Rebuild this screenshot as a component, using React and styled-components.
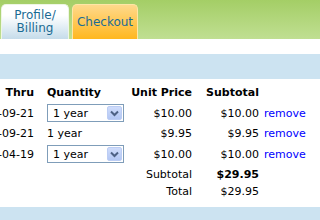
import React from 'react';
import styled, { createGlobalStyle } from 'styled-components';

const GlobalStyle = createGlobalStyle`
    body {
        margin: 0;
        background: #fff;
        font-family: "DejaVu Sans", Verdana, sans-serif;
        font-size: 11px;
        color: #000;
    }
`;

const Page = styled.div`
    width: 320px;
    height: 220px;
    overflow: hidden;
    display: flex;
    flex-direction: column;

    & > * {
        flex-shrink: 0;
    }
`;

const Header = styled.header`
    height: 39px;
    display: flex;
    align-items: flex-end;
    gap: 3px;
    padding-left: 1px;
    background-image: linear-gradient(180deg, #a4ce66, #c0df92);
`;

const Tab = styled.div`
    height: 35px;
    width: ${(p) => p.$width}px;
    box-sizing: border-box;
    display: flex;
    align-items: center;
    justify-content: center;
    text-align: center;
    font-size: 12px;
    line-height: 13px;
    color: #1b6b94;
    border: 1px solid ${(p) => (p.$active ? '#ffe6a6' : '#eef6e4')};
    border-bottom: none;
    border-radius: 5px 5px 0 0;
    background-image: ${(p) =>
        p.$active
            ? 'linear-gradient(180deg, #ffd98c, #ffb71f)'
            : 'linear-gradient(180deg, #ffffff 30%, #c5dcea)'};
`;

const Band = styled.div`
    height: ${(p) => p.$height}px;
    background: #cce3f1;
    margin-top: ${(p) => p.$top || 0}px;
`;

const Table = styled.div`
    display: flex;
    flex-direction: column;
`;

const Row = styled.div`
    display: grid;
    grid-template-columns: 47px 80px 65px 67px 1fr;
    align-items: ${(p) => (p.$head ? 'end' : 'center')};
    height: ${(p) => p.$height}px;
    padding-bottom: ${(p) => (p.$head ? 4 : 0)}px;
    box-sizing: border-box;
    font-weight: ${(p) => (p.$head ? 700 : 400)};
    white-space: nowrap;
`;

const Thru = styled.div`
    display: flex;
    justify-content: flex-end;
    overflow: hidden;
    padding-right: 13px;
`;

const Cell = styled.div`
    text-align: ${(p) => (p.$right ? 'right' : 'left')};
    font-weight: ${(p) => (p.$bold ? 700 : 'inherit')};
`;

const Remove = styled.a`
    padding-left: 5px;
    color: #0000ff;
    text-decoration: none;
    cursor: pointer;
`;

const SelectBox = styled.div`
    width: 77px;
    height: 18px;
    box-sizing: border-box;
    border: 1px solid #7f9db9;
    background: #fff;
    display: flex;
    align-items: center;
    padding: 1px;
`;

const SelectText = styled.span`
    flex: 1;
    padding-left: 4px;
`;

const DropButton = styled.span`
    width: 15px;
    height: 14px;
    box-sizing: border-box;
    display: flex;
    align-items: center;
    justify-content: center;
    border: 1px solid #bccdf4;
    border-radius: 2px;
    background-image: linear-gradient(180deg, #cfdcfb, #b3c7f4);
`;

function YearSelect() {
    return (
        <SelectBox>
            <SelectText>1 year</SelectText>
            <DropButton>
                <svg width="9" height="7" viewBox="0 0 9 7">
                    <path d="M1 1.5 L4.5 5 L8 1.5" fill="none" stroke="#4d6185" strokeWidth="2" />
                </svg>
            </DropButton>
        </SelectBox>
    );
}

const items = [
    { thru: '2012-09-21', select: true, price: '$10.00', subtotal: '$10.00', h: 20 },
    { thru: '2012-09-21', select: false, price: '$9.95', subtotal: '$9.95', h: 21 },
    { thru: '2012-04-19', select: true, price: '$10.00', subtotal: '$10.00', h: 20 },
];

export default function App() {
    return (
        <Page>
            <GlobalStyle />
            <Header>
                <Tab $width={68}>Profile/<br />Billing</Tab>
                <Tab $width={66} $active>Checkout</Tab>
            </Header>
            <Band $height={25} $top={15} />
            <Table>
                <Row $head $height={24}>
                    <Thru>Thru</Thru>
                    <Cell>Quantity</Cell>
                    <Cell $right>Unit Price</Cell>
                    <Cell $right>Subtotal</Cell>
                    <Cell />
                </Row>
                {items.map((item, i) => (
                    <Row key={i} $height={item.h}>
                        <Thru>{item.thru}</Thru>
                        <Cell>{item.select ? <YearSelect /> : '1 year'}</Cell>
                        <Cell $right>{item.price}</Cell>
                        <Cell $right>{item.subtotal}</Cell>
                        <Remove>remove</Remove>
                    </Row>
                ))}
                <Row $height={20}>
                    <Cell />
                    <Cell />
                    <Cell $right>Subtotal</Cell>
                    <Cell $right $bold>$29.95</Cell>
                    <Cell />
                </Row>
                <Row $height={15}>
                    <Cell />
                    <Cell />
                    <Cell $right>Total</Cell>
                    <Cell $right>$29.95</Cell>
                    <Cell />
                </Row>
            </Table>
            <Band $height={20} $top={8} />
        </Page>
    );
}
